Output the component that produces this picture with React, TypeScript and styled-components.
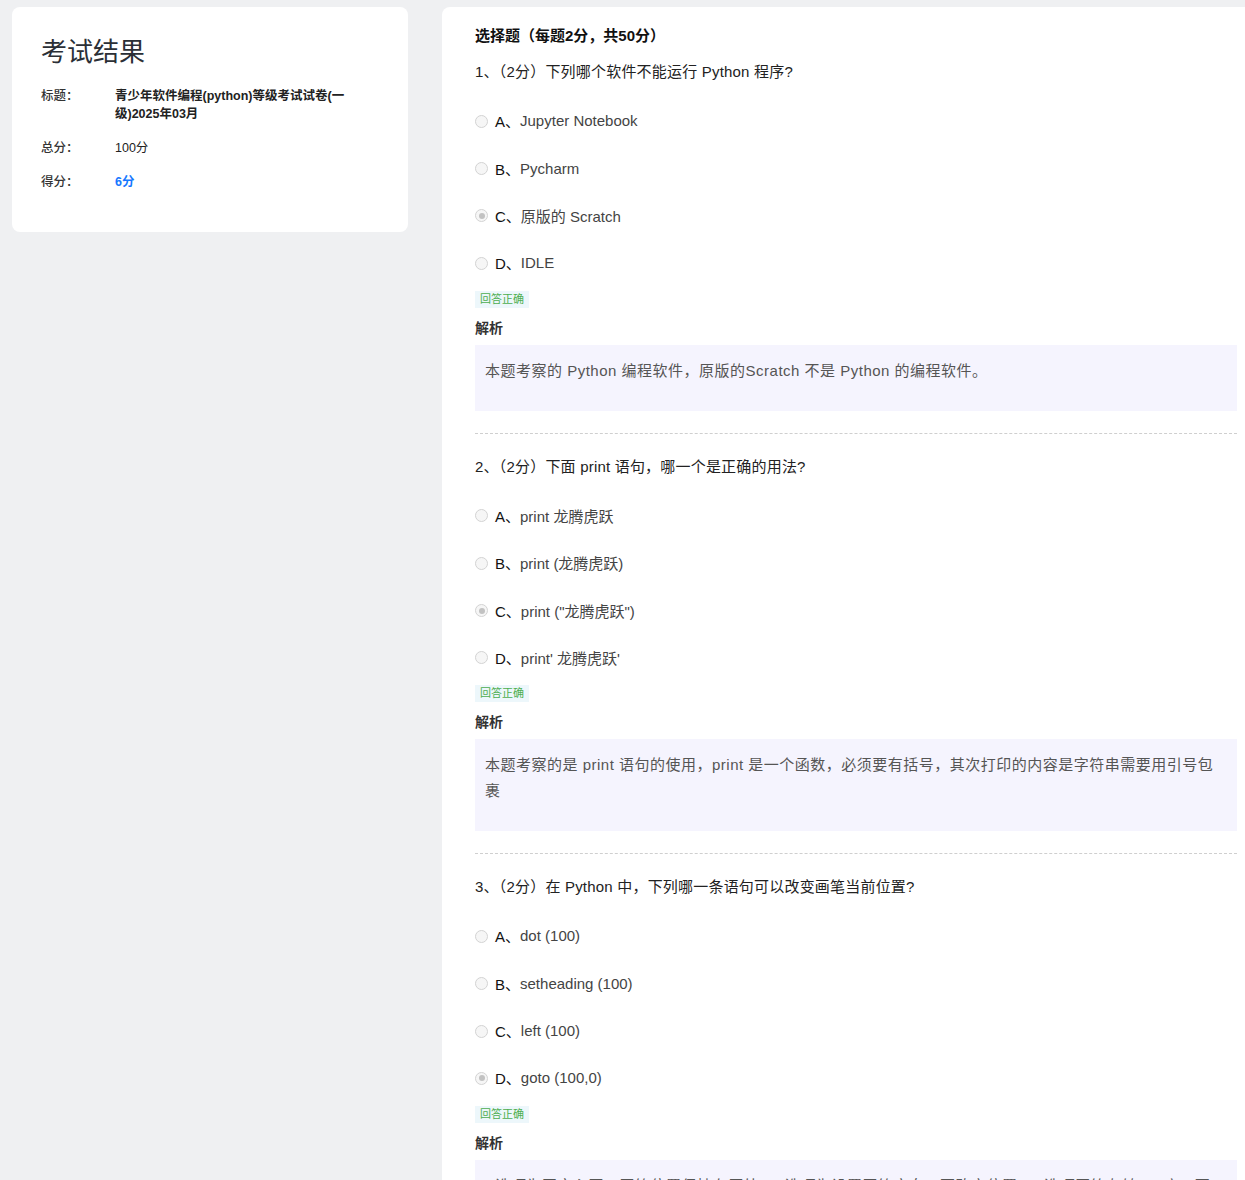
import React from 'react'
import styled, { createGlobalStyle } from 'styled-components'

const GlobalStyle = createGlobalStyle`
  html, body {
    margin: 0;
    padding: 0;
    overflow: hidden;
    background: #eff0f2;
    font-family: "Liberation Sans", "Noto Sans CJK SC", sans-serif;
    color: #222;
  }
`

type Question = {
  no: number
  title: string
  options: string[]
  answer: number
  analysis: string
}

const questions: Question[] = [
  {
    no: 1,
    title: '下列哪个软件不能运行 Python 程序?',
    options: ['Jupyter Notebook', 'Pycharm', '原版的 Scratch', 'IDLE'],
    answer: 2,
    analysis: '本题考察的 Python 编程软件，原版的Scratch 不是 Python 的编程软件。'
  },
  {
    no: 2,
    title: '下面 print 语句，哪一个是正确的用法?',
    options: ['print 龙腾虎跃', 'print (龙腾虎跃)', 'print ("龙腾虎跃")', "print' 龙腾虎跃'"],
    answer: 2,
    analysis:
      '本题考察的是 print 语句的使用，print 是一个函数，必须要有括号，其次打印的内容是字符串需要用引号包裹'
  },
  {
    no: 3,
    title: '在 Python 中，下列哪一条语句可以改变画笔当前位置?',
    options: ['dot (100)', 'setheading (100)', 'left (100)', 'goto (100,0)'],
    answer: 3,
    analysis:
      'A选项为画实心圆，画笔位置保持在原处，B选项为设置画笔方向，不改变位置，C选项画笔左转100度，不改变位置，D选项将画笔移动到指定坐标。'
  }
]

const letters = ['A', 'B', 'C', 'D']

const App = () => {
  return (
    <Page>
      <GlobalStyle />
      <InfoCard>
        <CardTitle>考试结果</CardTitle>
        <InfoRow>
          <InfoLabel>标题：</InfoLabel>
          <InfoValue bold>青少年软件编程(python)等级考试试卷(一级)2025年03月</InfoValue>
        </InfoRow>
        <InfoRow>
          <InfoLabel>总分：</InfoLabel>
          <InfoValue>100分</InfoValue>
        </InfoRow>
        <InfoRow>
          <InfoLabel>得分：</InfoLabel>
          <InfoValue bold highlight>6分</InfoValue>
        </InfoRow>
      </InfoCard>

      <Paper>
        <SectionTitle>选择题（每题2分，共50分）</SectionTitle>
        {questions.map((q, qi) => (
          <QuestionBlock key={q.no} last={qi === questions.length - 1}>
            <QuestionTitle>
              {q.no}、（2分）{q.title}
            </QuestionTitle>
            <OptionList>
              {q.options.map((opt, i) => (
                <OptionRow key={i}>
                  <Radio checked={i === q.answer} />
                  <OptionLetter>{letters[i]}、</OptionLetter>
                  <OptionText>{opt}</OptionText>
                </OptionRow>
              ))}
            </OptionList>
            <ResultTag>回答正确</ResultTag>
            <AnalysisLabel>解析</AnalysisLabel>
            <AnalysisBox>{q.analysis}</AnalysisBox>
          </QuestionBlock>
        ))}
      </Paper>
    </Page>
  )
}

const Page = styled.div`
  display: flex;
  align-items: flex-start;
  gap: 34px;
  padding: 7px 0 0 12px;
  min-height: 1180px;
  box-sizing: border-box;
`

const InfoCard = styled.div`
  width: 396px;
  flex-shrink: 0;
  background: #fff;
  border-radius: 8px;
  padding: 27px 29px 41px;
  box-sizing: border-box;
`

const CardTitle = styled.h1`
  margin: 0 0 17px;
  font-size: 26px;
  line-height: 36px;
  font-weight: 400;
  color: #2b2f36;
`

const InfoRow = styled.div`
  display: flex;
  font-size: 12.5px;
  line-height: 18px;
  margin-bottom: 16px;

  &:last-child {
    margin-bottom: 0;
  }
`

const InfoLabel = styled.div`
  width: 74px;
  flex-shrink: 0;
  color: #333;
  font-weight: 500;
`

const InfoValue = styled.div<{ bold?: boolean; highlight?: boolean }>`
  flex: 1;
  padding-right: 20px;
  font-weight: ${p => (p.bold ? 700 : 400)};
  color: ${p => (p.highlight ? '#1677ff' : '#222')};
`

const Paper = styled.div`
  flex: 1;
  background: #fff;
  border-radius: 8px 0 0 0;
  padding: 18px 8px 0 33px;
  min-height: 1173px;
  box-sizing: border-box;
`

const SectionTitle = styled.div`
  font-size: 15px;
  line-height: 22px;
  font-weight: 700;
  color: #111;
  margin-bottom: 13px;
`

const QuestionBlock = styled.div<{ last?: boolean }>`
  padding-bottom: ${p => (p.last ? 0 : 22)}px;
  margin-bottom: 21px;
  border-bottom: ${p => (p.last ? 'none' : '1px dashed #cfcfcf')};
`

const QuestionTitle = styled.div`
  font-size: 15px;
  line-height: 24px;
  letter-spacing: 0.2px;
  color: #222;
  margin-bottom: 13px;
`

const OptionList = styled.div`
  display: flex;
  flex-direction: column;
`

const OptionRow = styled.div`
  height: 47.4px;
  display: flex;
  align-items: center;
  font-size: 15px;
`

const Radio = styled.span<{ checked?: boolean }>`
  width: 13px;
  height: 13px;
  border-radius: 50%;
  border: 1px solid #d3d3d3;
  background: #f6f6f6;
  box-sizing: border-box;
  margin-right: 7px;
  margin-top: 1px;
  position: relative;
  flex-shrink: 0;

  &::after {
    content: '';
    display: ${p => (p.checked ? 'block' : 'none')};
    position: absolute;
    left: 2.5px;
    top: 2.5px;
    width: 6px;
    height: 6px;
    border-radius: 50%;
    background: #c2c2c2;
  }
`

const OptionLetter = styled.span`
  color: #111;
`

const OptionText = styled.span`
  color: #444;
`

const ResultTag = styled.div`
  display: inline-block;
  margin-top: 4px;
  padding: 0 5px;
  height: 17px;
  line-height: 17px;
  font-size: 11px;
  color: #4cae4f;
  background: #edf7fb;
`

const AnalysisLabel = styled.div`
  margin-top: 9px;
  font-size: 14px;
  line-height: 22px;
  font-weight: 700;
  color: #333;
`

const AnalysisBox = styled.div`
  margin-top: 6px;
  background: #f5f4fe;
  padding: 13px 22px 27px 10px;
  font-size: 15px;
  line-height: 26px;
  letter-spacing: 0.5px;
  color: #555;
`

export default App
